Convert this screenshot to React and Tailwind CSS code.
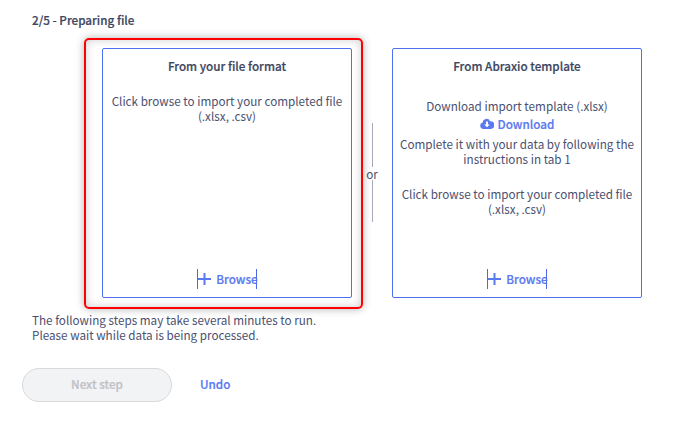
import React from "react";

const font = { fontFamily: '"Noto Sans CJK SC", "Noto Sans", sans-serif' };

function Browse() {
  return (
    <div className="flex items-center justify-center h-[20px]">
      <span className="relative flex items-center text-[#5a78f0] font-medium [-webkit-text-stroke:0.2px] text-[11.7px] leading-[20px] border-x border-[#4a68e8] h-[20px]">
        <svg width="16" height="16" viewBox="0 0 16 16" className="-ml-px">
          <path d="M7.5 2v12M1 8h13" stroke="#5a78f0" strokeWidth="2" fill="none" />
        </svg>
        <span className="ml-[3px] -mr-[2px]">Browse</span>
      </span>
    </div>
  );
}

function Card({ title, children }) {
  return (
    <div className="w-[250px] h-[250px] border border-[#4f6ff0] rounded-[2px] bg-white flex flex-col items-center px-[4px] text-center">
      <div className="mt-[8px] h-[18px] leading-[18px] text-[11.7px] font-medium [-webkit-text-stroke:0.2px] text-[#3d4660]">{title}</div>
      <div className="flex-1 w-full text-[11.7px] leading-[15px] text-[#4a5070]">{children}</div>
      <div className="mb-[8px]"><Browse /></div>
    </div>
  );
}

export default function App() {
  return (
    <div style={font} className="w-[683px] h-[428px] bg-white relative overflow-hidden">
      <div className="pl-[32px] pt-[11px] h-[48px] text-[11.7px] leading-[18px] font-medium [-webkit-text-stroke:0.2px] text-[#3d4660]">2/5 - Preparing file</div>
      <div className="flex ml-[102px]">
        <div className="relative">
          <Card title="From your file format">
            <div className="mt-[18px]">Click browse to import your completed file<br />(.xlsx, .csv)</div>
          </Card>
          <div className="absolute -top-[10px] -left-[18px] -right-[11px] -bottom-[11px] border-2 border-[#ff0000] rounded-[5px] shadow-[0_0_8px_rgba(0,0,0,0.3),inset_0_0_8px_rgba(0,0,0,0.2)] pointer-events-none" />
        </div>
        <div className="w-[40px] h-[250px] flex flex-col items-center pt-[75px]">
          <div className="w-px h-[44px] bg-[#a6a9b8]" />
          <div className="text-[11.7px] leading-[15px] h-[15px] -mt-[1px] mb-[-1px] text-[#4a5070]">or</div>
          <div className="w-px h-[42px] bg-[#a6a9b8]" />
        </div>
        <Card title="From Abraxio template">
          <div className="mt-[23px]">Download import template (.xlsx)</div>
          <div className="flex items-center justify-center gap-[4px] h-[18px] mt-[1px] text-[#5a78f0] font-medium [-webkit-text-stroke:0.2px] text-[11.7px]">
            <svg width="14" height="11" viewBox="0 0 14 11">
              <path fill="#5a78f0" d="M3.5 11A3.3 3.3 0 0 1 2.7 4.5 3.8 3.8 0 0 1 10 3.2 3.1 3.1 0 0 1 11 11ZM6 3.5v3H4.2L7 9.3l2.8-2.8H8v-3Z" fillRule="evenodd" />
            </svg>
            Download
          </div>
          <div className="mt-[4px]">Complete it with your data by following the instructions in tab 1</div>
          <div className="mt-[20px]">Click browse to import your completed file<br />(.xlsx, .csv)</div>
        </Card>
      </div>
      <div className="pl-[32px] mt-[14px] text-[11.7px] leading-[15px] text-[#4a5070]">
        The following steps may take several minutes to run.<br />Please wait while data is being processed.
      </div>
      <div className="flex items-center ml-[22px] mt-[26px]">
        <div className="w-[150px] h-[34px] pb-[2px] rounded-[17px] border border-[#d8d9dc] bg-[#f2f3f5] flex items-center justify-center text-[11.7px] font-medium [-webkit-text-stroke:0.2px] text-[#c0c1c5]">Next step</div>
        <div className="ml-[28px] pb-[2px] text-[11.7px] font-medium [-webkit-text-stroke:0.2px] text-[#5a78f0]">Undo</div>
      </div>
    </div>
  );
}
